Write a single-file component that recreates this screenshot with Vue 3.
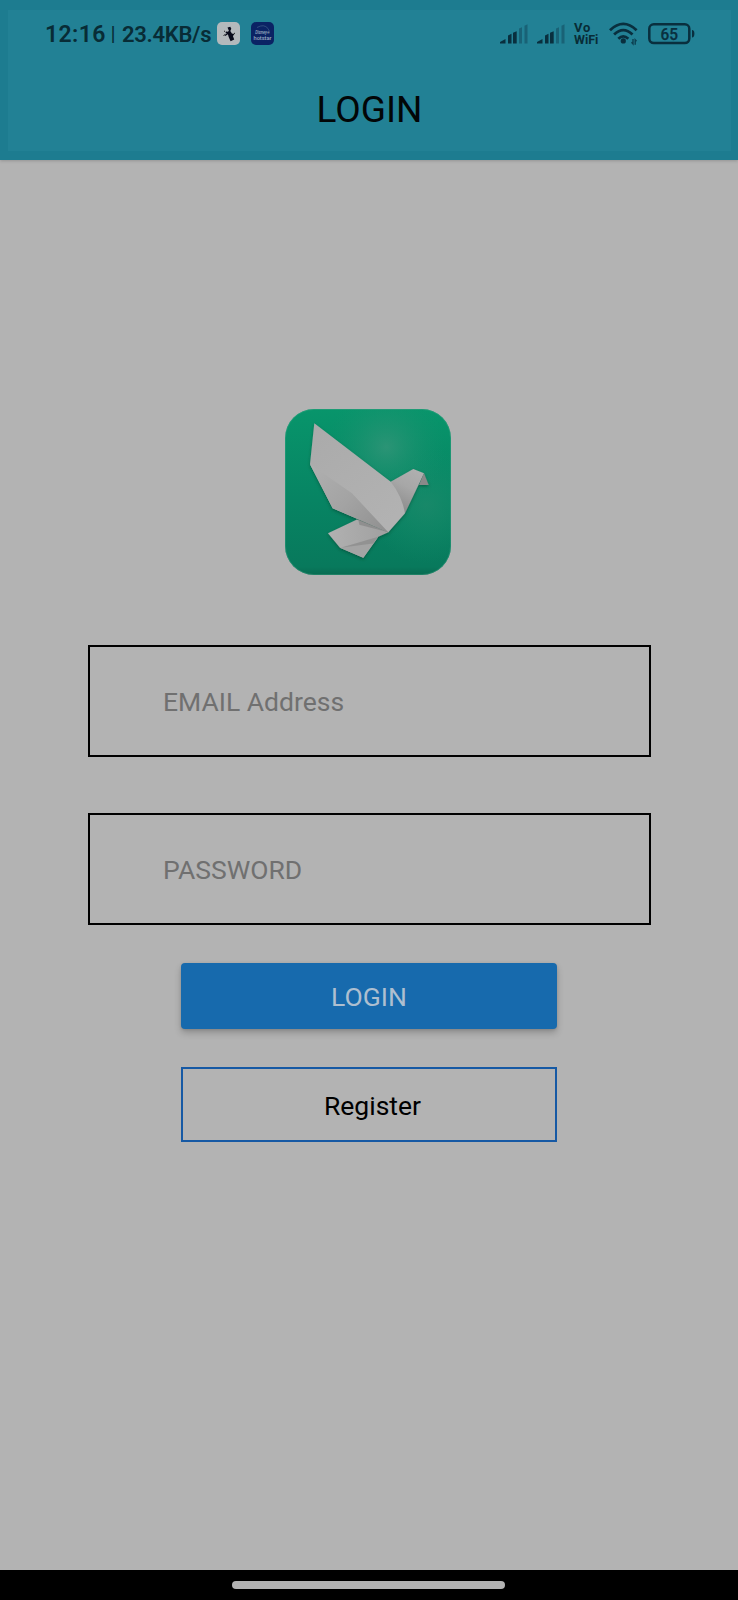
<script setup>
const title = 'LOGIN'
</script>

<template>
  <div class="screen">
    <header class="header">
      <div class="inner">
        <div class="status">
          <span class="clock">12:16</span>
          <span class="divider">|</span>
          <span class="speed">23.4KB/s</span>
          <svg class="app-a" width="23" height="23" viewBox="0 0 23 23">
            <rect width="23" height="23" rx="5" fill="#b4b9bc" />
            <path d="M10.500 5.500l2.800-.8 1 2-1 2.200 1.600 2.500 2.500.8-1.500 1.700 1.300 3.600-3.600 1.700-1.900-4.300-.8-2.700-2.600 1.700-.5-1 2.300-1.900-1.600.2.400-1.800 2 .4 1-1z" fill="#090b1b" />
            <path d="M6.500 13.500l1.500-.8M7 9l1 .5M16.500 12l1.500-1" stroke="#222" />
          </svg>
          <svg class="app-b" width="23" height="23" viewBox="0 0 23 23">
            <rect width="23" height="23" rx="5" fill="#0b2364" />
            <path d="M6 5.500q7-4 11 1q2 3 1.500 5" stroke="#46678e" stroke-width=".6" fill="none" />
            <text x="11.2" y="12" text-anchor="middle" font-size="6" font-style="italic" font-weight="500" fill="#9cadc2" textLength="14" lengthAdjust="spacingAndGlyphs">Disney+</text>
            <text x="11.5" y="18" text-anchor="middle" font-size="6" font-weight="500" fill="#9cadc2" textLength="18" lengthAdjust="spacingAndGlyphs">hotstar</text>
          </svg>
          <span class="spacer"></span>
          <svg v-for="n in 2" :key="n" class="signal" width="28" height="20" viewBox="0 0 28 20">
            <path d="M0 19.500v-1.600l5.500-3v4.600z" fill="#092f3e" />
            <path d="M8 11.500l3.500-1.700v9.700H8z" fill="#092f3e" />
            <path d="M13 8.800l3.700-1.600v12.300H13z" fill="#092f3e" />
            <path d="M19 4.500l3-1.300v16.300h-3zM24.500 1.800l3-1.500v19.200h-3z" fill="#196276" />
          </svg>
          <span class="vowifi"><span class="vo">Vo</span><span class="wf">WiFi</span></span>
          <svg class="wifi" width="30" height="24" viewBox="0 0 30 24">
            <g fill="none" stroke="#092f3e" stroke-width="2.8">
              <path d="M1 8.200Q14.300-4.400 27.600 8.200" />
              <path d="M5.100 12.500Q14.300 3.800 23.500 12.500" />
              <path d="M9.300 16.700Q14.300 12 19.300 16.700" />
            </g>
            <circle cx="14.3" cy="18.900" r="2.600" fill="#092f3e" />
            <path d="M24 17v5l-1.500-1.700M26.200 22.800v-5l1.300 1.500" fill="none" stroke="#0c4051" stroke-width="1.400" />
          </svg>
          <svg class="battery" width="47" height="22" viewBox="0 0 47 22">
            <rect x="1.300" y="1.300" width="40" height="18.800" rx="4.500" fill="none" stroke="#092f3e" stroke-width="2.500" />
            <path d="M44 7q2.400 0 2.400 3.700T44 14.400z" fill="#092f3e" />
            <text x="21.2" y="16.5" text-anchor="middle" font-size="16" font-weight="500" fill="#092f3e" stroke="#092f3e" stroke-width=".25" textLength="17.500" lengthAdjust="spacingAndGlyphs">65</text>
          </svg>
        </div>
        <h1 class="title">{{ title }}</h1>
      </div>
    </header>

    <main class="main">
      <svg class="logo" width="166" height="166" viewBox="0 0 166 166">
        <defs>
          <linearGradient id="green" x1="0" y1="0" x2="0" y2="1">
            <stop offset="0" stop-color="#08956b" />
            <stop offset=".55" stop-color="#078463" />
            <stop offset=".95" stop-color="#08795c" />
            <stop offset="1" stop-color="#086b51" />
          </linearGradient>
          <radialGradient id="glow" cx=".61" cy=".23" r=".36">
            <stop offset="0" stop-color="#37967a" stop-opacity=".75" />
            <stop offset="1" stop-color="#16906d" stop-opacity="0" />
          </radialGradient>
          <radialGradient id="glow2" cx=".85" cy=".58" r=".35">
            <stop offset="0" stop-color="#238c6d" stop-opacity=".6" />
            <stop offset="1" stop-color="#16906d" stop-opacity="0" />
          </radialGradient>
          <linearGradient id="wing" x1="0" y1="0" x2=".7" y2="1">
            <stop offset="0" stop-color="#aaaaaa" />
            <stop offset="1" stop-color="#b2b2b2" />
          </linearGradient>
          <linearGradient id="under" gradientUnits="userSpaceOnUse" x1="30" y1="55" x2="100" y2="124">
            <stop offset="0" stop-color="#afafaf" />
            <stop offset=".5" stop-color="#a3a3a3" />
            <stop offset="1" stop-color="#909090" />
          </linearGradient>
          <linearGradient id="head" x1=".8" y1="0" x2=".4" y2="1">
            <stop offset="0" stop-color="#b0b0b0" />
            <stop offset=".45" stop-color="#a7a7a7" />
            <stop offset="1" stop-color="#8b8b8b" />
          </linearGradient>
          <linearGradient id="tail" x1="0" y1="0" x2="1" y2="0">
            <stop offset="0" stop-color="#b1b1b1" />
            <stop offset="1" stop-color="#a0a0a0" />
          </linearGradient>
          <filter id="shade" x="-20%" y="-20%" width="140%" height="140%">
            <feDropShadow dx="0" dy="1.5" stdDeviation="1.6" flood-color="#003e2b" flood-opacity=".5" />
          </filter>
        </defs>
        <rect width="166" height="166" rx="29" fill="url(#green)" />
        <rect width="166" height="166" rx="29" fill="url(#glow)" />
        <rect width="166" height="166" rx="29" fill="url(#glow2)" />
        <rect x=".5" y=".5" width="165" height="165" rx="28.500" fill="none" stroke="#45a88a" stroke-opacity=".35" />
        <g filter="url(#shade)">
          <path d="M72 110.500L43 124.300l12 14.400 23.300 10 15-21 10-4.400z" fill="url(#tail)" />
          <path d="M105.700 72.700l22.600-12.700 10.700 4.300-19 40-8-8z" fill="url(#head)" />
          <path d="M29.300 14.300L105.700 72.700Q117 87 120 104.300l-16.700 19-30-13L47.700 99.300 25 55.300z" fill="url(#wing)" />
          <path d="M25 55.300l42 29 36.300 39-30-13-25.600-11z" fill="url(#under)" />
          <path d="M139 64.300l4.700 11.700H134z" fill="#898989" />
          <path d="M93.300 127.700L55 138.700l23.300 10z" fill="#a4a4a4" />
          <path d="M73.300 110.300l30 13-29-7.500z" fill="#858585" opacity=".7" />
          <path d="M93.300 127.700L57 138.500l31-4z" fill="#888" opacity=".65" />
        </g>
      </svg>

      <input class="field email" type="text" placeholder="EMAIL Address" />
      <input class="field password" type="password" placeholder="PASSWORD" />
      <button class="login">LOGIN</button>
      <button class="register">Register</button>
    </main>

    <footer class="nav"><div class="pill"></div></footer>
  </div>
</template>

<style>
body { background: #b3b3b3; }
</style>

<style scoped>
* { box-sizing: border-box; }
.screen {
  width: 738px;
  height: 1600px;
  display: flex;
  flex-direction: column;
  background: #b3b3b3;
  font-family: Roboto, "Noto Sans", sans-serif;
}
.header {
  height: 160px;
  flex: none;
  padding: 10px 7px 9px 8px;
  background: #1d7c90;
  box-shadow: 0 1px 3px rgba(0, 0, 0, 0.18);
}
.inner { height: 141px; background: #228195; }
.status {
  height: 48px;
  display: flex;
  align-items: flex-start;
  padding: 0 36px 0 37px;
  color: #082c36;
  white-space: nowrap;
}
.clock { width: 65.500px; margin-top: 11px; font-size: 23px; line-height: 27px; font-weight: 600; letter-spacing: 0.4px; }
.divider { width: 11.500px; margin-top: 11px; font-size: 21px; line-height: 26px; }
.speed { width: 94.500px; margin-top: 11px; font-size: 22px; line-height: 27px; font-weight: 600; letter-spacing: -0.3px; }
.app-a { margin: 12px 11px 0 0; }
.app-b { margin-top: 12px; }
.spacer { flex: 1; }
.signal { margin: 14px 9px 0 0; }
.vowifi { display: flex; flex-direction: column; width: 35px; margin-top: 11px; font-weight: 700; }
.vo { font-size: 13px; line-height: 13px; letter-spacing: 0.8px; }
.wf { font-size: 12.500px; line-height: 11px; }
.wifi { margin-top: 12px; }
.battery { margin: 13px 0 0 9px; }
.title {
  margin: 30px 0 0;
  text-align: center;
  font-size: 37px;
  line-height: 44px;
  font-weight: 400;
  color: #020607;
}
.main {
  flex: 1;
  display: flex;
  flex-direction: column;
  align-items: center;
}
.logo { margin: 249px 3px 70px 0; flex: none; }
.field {
  width: 563px;
  height: 112px;
  margin: 0 0 56px 1px;
  padding: 0 73px;
  border: 2px solid #000;
  border-radius: 0;
  background: transparent;
  font-family: inherit;
  font-size: 26.500px;
  outline: none;
}
.field::placeholder { color: #707070; opacity: 1; }
.password { margin-bottom: 38px; }
.login, .register {
  width: 376px;
  font-family: inherit;
  font-size: 26.500px;
  padding: 1px 0 0;
}
.login {
  height: 66px;
  margin-bottom: 38px;
  border: 0;
  border-radius: 4px;
  background: #176aad;
  color: #aebfd0;
  box-shadow: 0 4px 7px rgba(0, 0, 0, 0.2), 0 1px 3px rgba(0, 0, 0, 0.1);
}
.register {
  height: 75px;
  padding-left: 7px;
  border: 2px solid #1659a4;
  background: transparent;
  color: #000;
}
.nav {
  height: 30px;
  flex: none;
  background: #000;
  display: flex;
  justify-content: center;
  padding-top: 11px;
}
.pill { width: 273px; height: 8px; margin-right: 1px; border-radius: 4px; background: #b3b3b3; }
</style>
